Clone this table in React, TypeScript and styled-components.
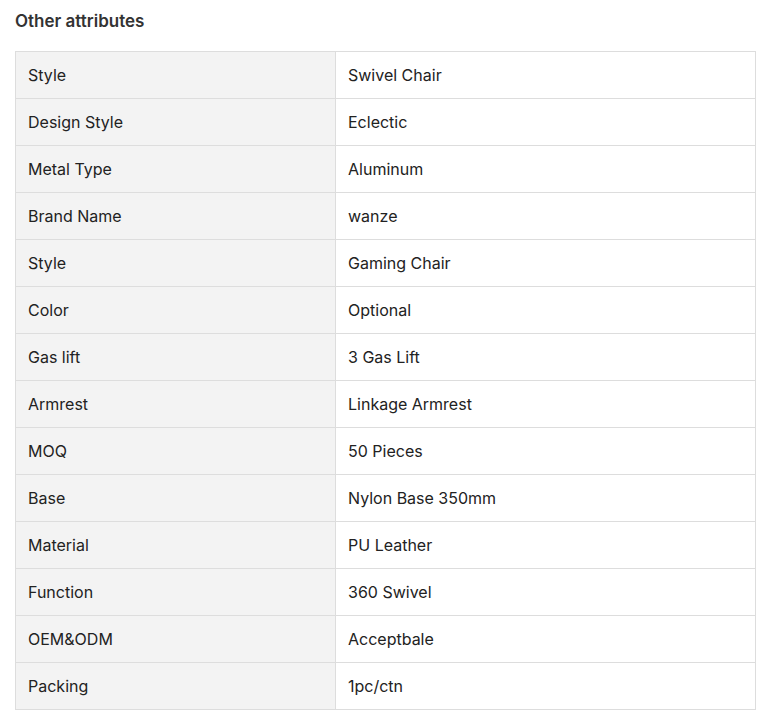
import React from "react";
import styled, { createGlobalStyle } from "styled-components";

const Global = createGlobalStyle`
  body { margin: 0; background: #fff; font-family: Inter, "Noto Sans", sans-serif; }
`;

const Page = styled.div`
  padding: 9px 15px 0 15px;
`;

const Title = styled.h3`
  margin: 0 0 18px 0;
  font-size: 17px;
  line-height: 24px;
  font-weight: 600;
  color: #333;
`;

const Table = styled.table`
  width: 741px;
  border-collapse: collapse;
  border: 1px solid #dddddd;
  table-layout: fixed;
`;

const Cell = styled.td<{ $label?: boolean }>`
  height: 47px;
  padding: 0 12px;
  box-sizing: border-box;
  border: 1px solid #dddddd;
  font-size: 16px;
  color: #222;
  background: ${(p) => (p.$label ? "#f3f3f3" : "#fff")};
  width: ${(p) => (p.$label ? "320px" : "auto")};
  vertical-align: middle;
`;

const rows: [string, string][] = [
  ["Style", "Swivel Chair"],
  ["Design Style", "Eclectic"],
  ["Metal Type", "Aluminum"],
  ["Brand Name", "wanze"],
  ["Style", "Gaming Chair"],
  ["Color", "Optional"],
  ["Gas lift", "3 Gas Lift"],
  ["Armrest", "Linkage Armrest"],
  ["MOQ", "50 Pieces"],
  ["Base", "Nylon Base 350mm"],
  ["Material", "PU Leather"],
  ["Function", "360 Swivel"],
  ["OEM&ODM", "Acceptbale"],
  ["Packing", "1pc/ctn"],
];

export default function App() {
  return (
    <Page>
      <Global />
      <Title>Other attributes</Title>
      <Table>
        <tbody>
          {rows.map(([k, v], i) => (
            <tr key={i}>
              <Cell $label>{k}</Cell>
              <Cell>{v}</Cell>
            </tr>
          ))}
        </tbody>
      </Table>
    </Page>
  );
}
